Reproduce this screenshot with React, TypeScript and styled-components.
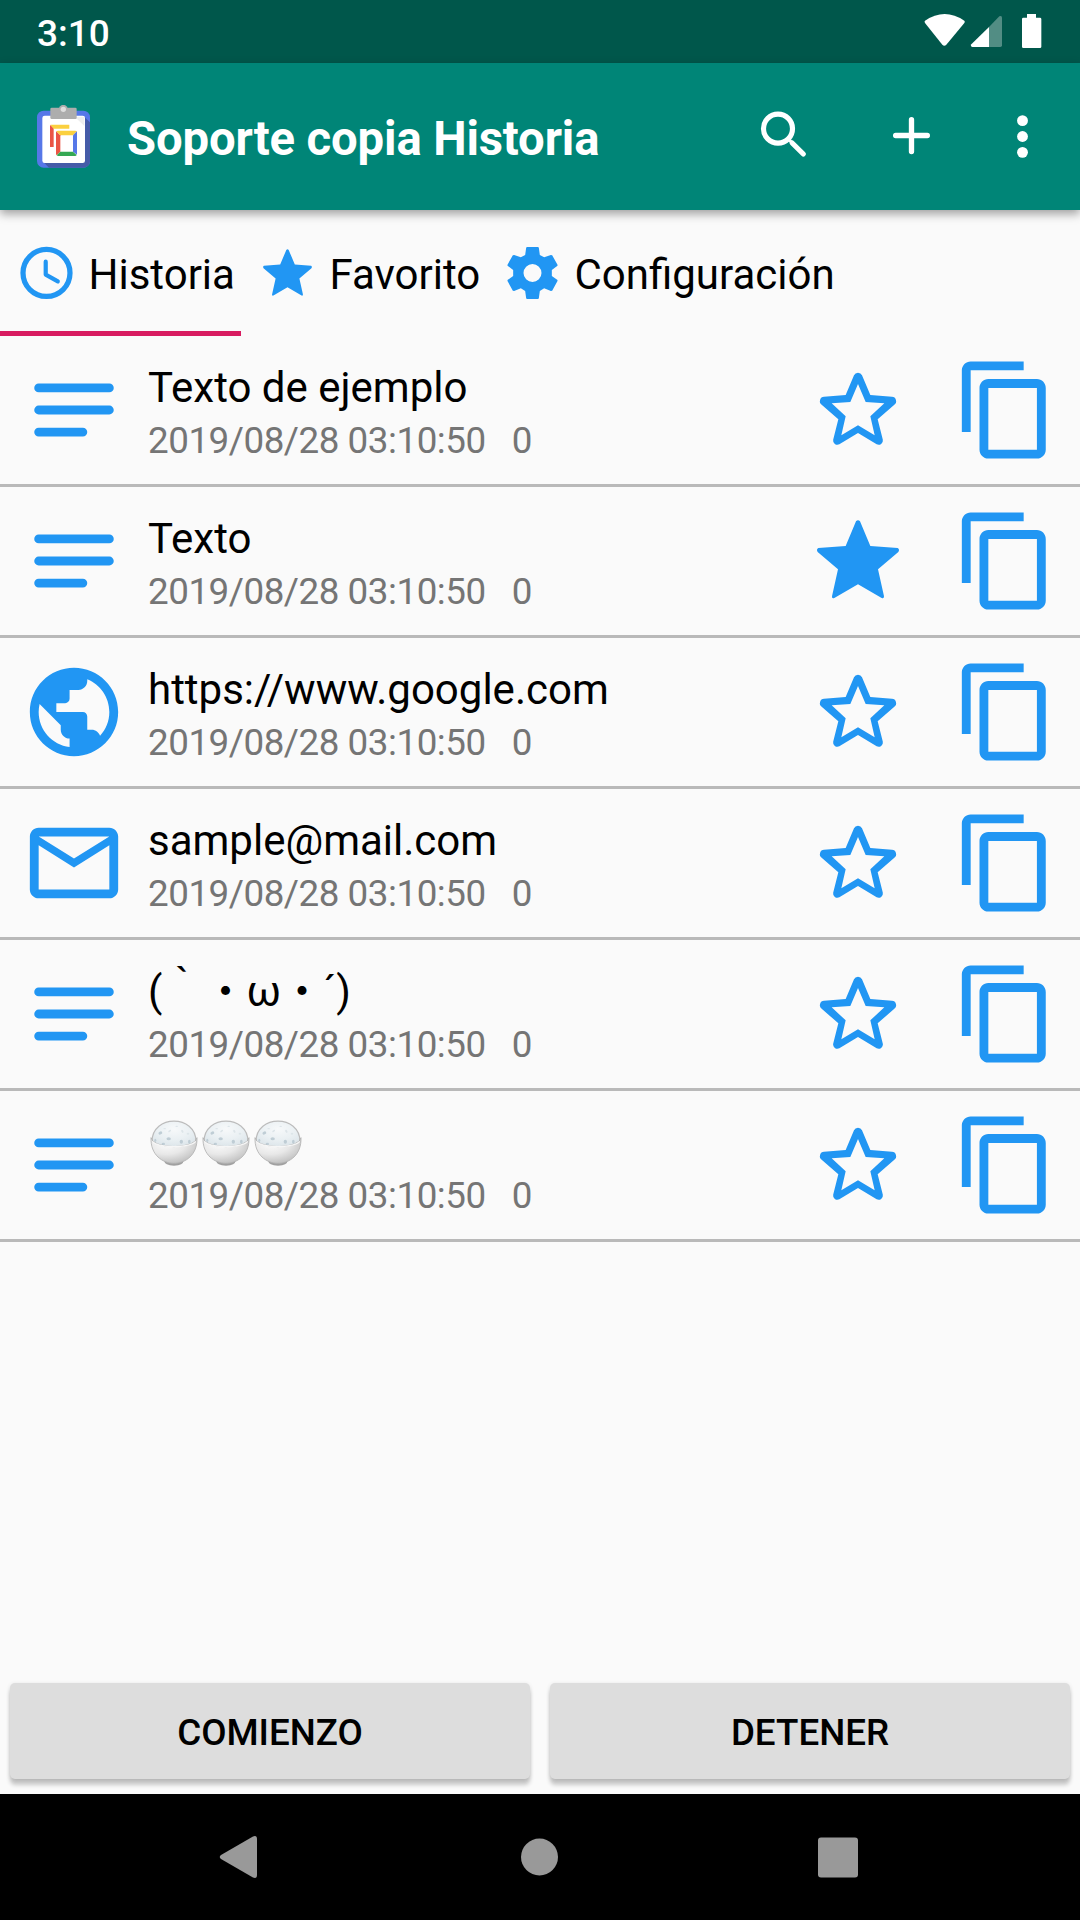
import React from 'react';
import styled, { createGlobalStyle } from 'styled-components';

const BLUE = '#2196f3';

const GlobalStyle = createGlobalStyle`
  * { box-sizing: border-box; }
  body {
    margin: 0;
    background: #fafafa;
    font-family: Roboto, 'Noto Sans CJK JP', sans-serif;
  }
  svg { display: block; flex: none; }
`;

const Screen = styled.div`
  display: flex;
  flex-direction: column;
  width: 1080px;
  height: 1920px;
  background: #fafafa;
  overflow: hidden;
`;

const StatusBar = styled.header`
  display: flex;
  align-items: center;
  flex: none;
  height: 63px;
  padding: 0 38px 0 37px;
  background: #00574b;
`;

const Time = styled.span`
  flex: 1;
  padding-top: 3px;
  color: #fff;
  font-size: 37px;
  font-weight: 500;
`;

const StatusIcons = styled.div`
  display: flex;
  align-items: center;
`;

const Toolbar = styled.div`
  position: relative;
  z-index: 1;
  display: flex;
  align-items: center;
  flex: none;
  height: 147px;
  padding: 0 26px 0 32px;
  background: #008577;
  box-shadow: 0 4px 9px rgba(0, 0, 0, 0.36);
`;

const Title = styled.h1`
  flex: 1;
  margin: 0;
  padding: 5px 0 0 32px;
  color: #fff;
  font-size: 47.25px;
  font-weight: 700;
  letter-spacing: -0.14px;
  line-height: 56px;
  white-space: nowrap;
`;

const ToolButton = styled.button<{ $gap: number }>`
  margin: 0 ${(p) => p.$gap}px 0 0;
  padding: 0;
  border: 0;
  background: none;
`;

const Tabs = styled.nav`
  display: flex;
  flex: none;
  height: 126px;
`;

const Tab = styled.div<{ $width: number; $active?: boolean }>`
  display: flex;
  align-items: center;
  gap: 10.5px;
  width: ${(p) => p.$width}px;
  padding: 5px 0 0 15px;
  border-bottom: 5px solid ${(p) => (p.$active ? '#d81b60' : 'transparent')};
`;

const TabLabel = styled.span`
  padding-top: 3px;
  color: #000;
  font-size: 42px;
  line-height: 50px;
  white-space: nowrap;
`;

const List = styled.ul`
  flex: 1;
  margin: 0;
  padding: 0;
  list-style: none;
`;

const Row = styled.li`
  display: flex;
  align-items: center;
  height: 151px;
  padding: 0 21px;
  border-bottom: 3px solid #b9b9b9;
`;

const RowText = styled.div`
  flex: 1;
  height: 106px;
  padding: 3px 0 0 21px;
`;

const RowTitle = styled.div`
  display: flex;
  align-items: center;
  height: 56px;
  color: #000;
  font-size: 42px;
  line-height: 56px;
  white-space: nowrap;
`;

const Emoji = styled.span`
  display: flex;
  padding-top: 1px;
`;

const RowMeta = styled.div`
  display: flex;
  gap: 26px;
  color: #757575;
  font-size: 36.75px;
  letter-spacing: -0.46px;
  line-height: 50px;
`;

const RowActions = styled.div`
  display: flex;
  gap: 42px;
`;

const Footer = styled.div`
  display: flex;
  gap: 20px;
  flex: none;
  padding: 0 10px 15px;
`;

const ActionButton = styled.button`
  flex: 1;
  height: 96px;
  padding: 3px 0 0;
  border: 0;
  border-radius: 5px;
  background: #ddd;
  box-shadow: 0 6px 4px rgba(0, 0, 0, 0.2), 0 1px 4px rgba(0, 0, 0, 0.12);
  color: #000;
  font-family: inherit;
  font-size: 36.75px;
  font-weight: 500;
`;

const NavBar = styled.div`
  position: relative;
  display: flex;
  align-items: center;
  justify-content: space-between;
  flex: none;
  height: 126px;
  padding: 0 210px 0 208px;
  background: #000;
`;

const Wifi = () => (
  <svg width="42" height="63" viewBox="612 0 126 189" fill="#fff">
    <path d="M615 62 Q674 22 733 62 Q736 65 733 69 L679 134 Q673 140 667 134 L615 69 Q612 65 615 62Z" />
  </svg>
);

const Signal = () => (
  <svg width="55" height="63" viewBox="738 0 165 189" fill="#fff">
    <path opacity=".32" d="M807 81 L838 49 Q846 45 846 54 V136 Q846 141 841 141 H807Z" />
    <path d="M807 81 V141 H757 Q750 139 754 133Z" />
  </svg>
);

const Battery = () => (
  <svg width="21" height="63" viewBox="903 0 63 189" fill="#fff">
    <path d="M921 42 H948 V53 H960 Q964 53 964 57 V140 Q964 144 960 144 H910 Q906 144 906 140 V57 Q906 53 910 53 H921Z" />
  </svg>
);

const Logo = () => (
  <svg width="63" height="63" viewBox="96 315 189 189">
    <rect x="111" y="332" width="159" height="171" rx="20" fill="#5677e8" />
    <path d="M252 350 L270 367 V484 Q269 502 250 503 H147 L131 487Z" fill="#455ba8" />
    <rect x="127" y="347" width="128" height="142" rx="7" fill="#fff" />
    <path d="M160 357 H231 L253 378 V350 H160Z" fill="#eee" />
    <rect x="151" y="323" width="79" height="34" rx="4" fill="#adadad" />
    <circle cx="190" cy="328" r="13.5" fill="#adadad" />
    <circle cx="190" cy="328" r="8" fill="#dedede" />
    <path d="M151 375 L161 385 V441 H150 V377Z" fill="#ea5545" />
    <path d="M151 374 H208 V386 H161Z" fill="#fbd03f" />
    <path d="M169 394 L181 406 V455 L170 466 Q168 464 168 460 V397Z" fill="#ea5545" />
    <path d="M169 394 Q171 392 174 392 H226 Q229 392 231 394 L219 406 H181Z" fill="#fbd03f" />
    <path d="M231 394 V464 L219 455 V406Z" fill="#5677e8" />
    <path d="M170 466 L181 455 H219 L230 465 Q229 468 225 468 H174Z" fill="#34a853" />
  </svg>
);

const SearchIcon = () => (
  <svg width="63" height="63" viewBox="96 315 189 189" fill="none" stroke="#fff">
    <circle cx="174" cy="386" r="43.5" strokeWidth="15.5" />
    <path d="M203 415 L218 430" strokeWidth="9" />
    <path d="M216.5 429 L250 462" strokeWidth="15.5" strokeLinecap="round" />
  </svg>
);

const PlusIcon = () => (
  <svg width="63" height="63" viewBox="480 315 189 189" fill="none" stroke="#fff" strokeWidth="16" strokeLinecap="round">
    <path d="M574.5 359 V454.5 M527 406.5 H622" />
  </svg>
);

const MoreIcon = () => (
  <svg width="63" height="63" viewBox="813 315 189 189" fill="#fff">
    <circle cx="907.5" cy="362" r="16.3" />
    <circle cx="907.5" cy="409.5" r="16.3" />
    <circle cx="907.5" cy="457" r="16.3" />
  </svg>
);

const ClockIcon = () => (
  <svg width="63" height="63" viewBox="0 0.2 24 24" fill="none" stroke={BLUE} strokeLinecap="round" strokeLinejoin="round">
    <circle cx="12" cy="12" r="8.95" strokeWidth="2" />
    <path d="M11.7 7.7V12.6L16.3 15.2" strokeWidth="1.6" />
  </svg>
);

const GearIcon = () => (
  <svg width="63" height="63" viewBox="184.5 66 189 189" fill={BLUE}>
    <path
      fillRule="evenodd"
      d="M262 81 H296 L298 83 L301 105 L314 112 L334 105 L338 106 L354 134 V137 L337 150 V168 L354 180 V183 L338 212 L334 213 L314 205 L301 213 L298 235 L296 237 H262 L260 235 L257 213 L244 205 L224 213 L220 212 L204 183 V180 L221 168 V150 L204 137 V134 L220 106 L224 105 L244 112 L257 105 L260 83Z M252 159 A27 27 0 1 0 306 159 A27 27 0 1 0 252 159Z"
    />
  </svg>
);

const StarFilled = ({ size }: { size: number }) => (
  <svg width={size} height={size} viewBox="75 51 318 318" fill={BLUE}>
    <path d="M197 165 L228 91 Q234 84 240 91 L271 165 L353 171 Q360 176 355 183 L294 235 L312 316 Q312 324 305 321 L234 280 L163 321 Q155 324 156 316 L174 235 L113 183 Q108 176 115 171Z" />
  </svg>
);

const StarOutline = () => (
  <svg width="106" height="106" viewBox="75 51 318 318" fill={BLUE}>
    <path
      fillRule="evenodd"
      d="M197 165 L222 106 A13 13 0 0 1 246 106 L271 165 L336 170.5 A13 13 0 0 1 343 194 L293 238 L308.5 299 A13 13 0 0 1 290 313 L234 279 L178 313 A13 13 0 0 1 159.5 299 L175 238 L125 194 A13 13 0 0 1 132 170.5Z M234 132 L211 186 L155 190 L197 229 L184 286 L234 256 L284 286 L271 229 L313 190 L257 186Z"
    />
  </svg>
);

const glyphs = {
  copy: 'M16 1H4c-1.1 0-2 .9-2 2v14h2V3h12V1zm3 4H8c-1.1 0-2 .9-2 2v14c0 1.1.9 2 2 2h11c1.1 0 2-.9 2-2V7c0-1.1-.9-2-2-2zm0 16H8V7h11v14z',
  web: 'M12 2C6.48 2 2 6.48 2 12s4.48 10 10 10 10-4.48 10-10S17.52 2 12 2zm-1 17.93c-3.95-.49-7-3.85-7-7.93 0-.62.08-1.21.21-1.79L9 15v1c0 1.1.9 2 2 2v1.93zm6.9-2.54c-.26-.81-1-1.39-1.9-1.39h-1v-3c0-.55-.45-1-1-1H8v-2h2c.55 0 1-.45 1-1V7h2c1.1 0 2-.9 2-2v-.41c2.93 1.19 5 4.06 5 7.41 0 2.08-.8 3.97-2.1 5.39z',
  mail: 'M20 4H4c-1.1 0-1.99.9-1.99 2L2 18c0 1.1.9 2 2 2h16c1.1 0 2-.9 2-2V6c0-1.1-.9-2-2-2zm0 14H4V8l8 5 8-5v10zm-8-7L4 6h16l-8 5z',
  text: 'M4 6h16a1 1 0 0 1 0 2H4a1 1 0 0 1 0-2zM4 11h16a1 1 0 0 1 0 2H4a1 1 0 0 1 0-2zM4 16h10a1 1 0 0 1 0 2H4a1 1 0 0 1 0-2z',
};

const Glyph = ({ name }: { name: keyof typeof glyphs }) => (
  <svg width="106" height="106" viewBox="0 0 24 24" fill={BLUE}>
    <path d={glyphs[name]} />
  </svg>
);

const RiceBowl = () => (
  <svg width="52" height="56" viewBox="445 529 156 168">
    <defs>
      <radialGradient id="rice" cx=".5" cy=".3" r=".7">
        <stop offset="0" stopColor="#f7f9fa" />
        <stop offset=".55" stopColor="#eaf0f3" />
        <stop offset="1" stopColor="#dbe4e9" />
      </radialGradient>
      <radialGradient id="bowl" cx=".34" cy=".25" r=".8">
        <stop offset="0" stopColor="#fbfbfb" />
        <stop offset=".5" stopColor="#e8e8e8" />
        <stop offset="1" stopColor="#bdbdbd" />
      </radialGradient>
    </defs>
    <path d="M493 662 H552 Q551 678 523 678 Q495 678 493 662Z" fill="#a0a0a0" />
    <path d="M457 606 C457 524 589 524 589 606 Q588 620 523 624 Q458 620 457 606Z" fill="url(#rice)" stroke="#bcbcbc" strokeWidth="3.5" />
    <g fill="#bfcdd5">
      <ellipse cx="482" cy="580" rx="6" ry="4.5" transform="rotate(-25 482 580)" />
      <ellipse cx="507" cy="597" rx="6.5" ry="4.5" />
      <ellipse cx="467" cy="602" rx="3" ry="5" />
      <ellipse cx="491" cy="613" rx="5" ry="4" />
      <ellipse cx="545" cy="606" rx="5" ry="6" />
      <ellipse cx="569" cy="606" rx="4" ry="6" />
    </g>
    <g fill="#dde5e9">
      <ellipse cx="510" cy="574" rx="5" ry="2.5" transform="rotate(-35 510 574)" />
      <ellipse cx="548" cy="575" rx="3" ry="5" transform="rotate(-30 548 575)" />
      <ellipse cx="495" cy="567" rx="4" ry="2" />
      <ellipse cx="531" cy="560" rx="4" ry="2" />
      <ellipse cx="565" cy="582" rx="4" ry="3" />
    </g>
    <path d="M454 594 Q458 618 523 621 Q588 618 592 594 C594 646 557 671 523 671 C489 671 452 646 454 594Z" fill="url(#bowl)" stroke="#b2b2b2" strokeWidth="2.5" />
    <path d="M458 605 Q468 619 523 621 Q578 619 588 605" fill="none" stroke="#f6f6f6" strokeWidth="4" />
  </svg>
);

type Item = { icon: keyof typeof glyphs; title: React.ReactNode; starred?: boolean };

const items: Item[] = [
  { icon: 'text', title: 'Texto de ejemplo' },
  { icon: 'text', title: 'Texto', starred: true },
  { icon: 'web', title: 'https://www.google.com' },
  { icon: 'mail', title: 'sample@mail.com' },
  { icon: 'text', title: '(｀・ω・´)' },
  { icon: 'text', title: <Emoji><RiceBowl /><RiceBowl /><RiceBowl /></Emoji> },
];

export default function App() {
  return (
    <Screen>
      <GlobalStyle />
      <StatusBar>
        <Time>3:10</Time>
        <StatusIcons>
          <Wifi />
          <Signal />
          <Battery />
        </StatusIcons>
      </StatusBar>
      <Toolbar>
        <Logo />
        <Title>Soporte copia Historia</Title>
        <ToolButton $gap={65}><SearchIcon /></ToolButton>
        <ToolButton $gap={48}><PlusIcon /></ToolButton>
        <ToolButton $gap={0}><MoreIcon /></ToolButton>
      </Toolbar>
      <Tabs>
        <Tab $width={241} $active>
          <ClockIcon />
          <TabLabel>Historia</TabLabel>
        </Tab>
        <Tab $width={245}>
          <StarFilled size={63} />
          <TabLabel>Favorito</TabLabel>
        </Tab>
        <Tab $width={354}>
          <GearIcon />
          <TabLabel>Configuración</TabLabel>
        </Tab>
      </Tabs>
      <List>
        {items.map((item, i) => (
          <Row key={i}>
            <Glyph name={item.icon} />
            <RowText>
              <RowTitle>{item.title}</RowTitle>
              <RowMeta>
                <span>2019/08/28 03:10:50</span>
                <span>0</span>
              </RowMeta>
            </RowText>
            <RowActions>
              {item.starred ? <StarFilled size={106} /> : <StarOutline />}
              <Glyph name="copy" />
            </RowActions>
          </Row>
        ))}
      </List>
      <Footer>
        <ActionButton>COMIENZO</ActionButton>
        <ActionButton>DETENER</ActionButton>
      </Footer>
      <NavBar>
        <svg width="63" height="63" viewBox="0 0 63 63" fill="#999">
          <path d="M13 29 L45 10.5 Q49 9 49 13 V49 Q49 53 45 51.5 L13 33 Q10.5 31 13 29Z" />
        </svg>
        <svg width="63" height="63" viewBox="0 0 63 63" fill="#999">
          <circle cx="31.5" cy="31" r="18.5" />
        </svg>
        <svg width="63" height="63" viewBox="0 0 63 63" fill="#999">
          <rect x="11" y="11.5" width="40" height="40" rx="3" />
        </svg>
      </NavBar>
    </Screen>
  );
}
